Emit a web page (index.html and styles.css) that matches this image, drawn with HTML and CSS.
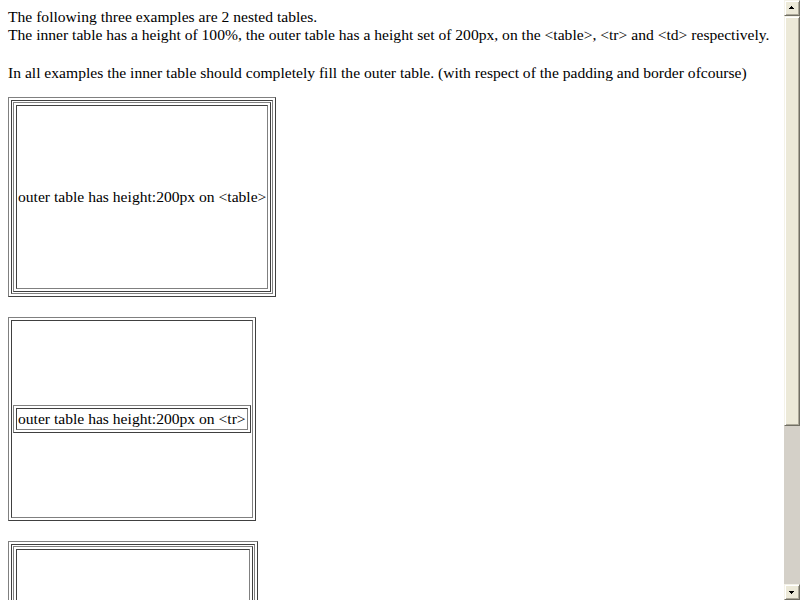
FILE: index.html
```html
<!DOCTYPE html>
<html>
<head>
<meta charset="utf-8">
<title>Nested tables</title>
<link rel="stylesheet" href="styles.css">
</head>
<body>
<div class="screen">
  <div class="page">
    <div class="intro">
      <div class="line">The following three examples are 2 nested tables.</div>
      <div class="line">The inner table has a height of 100%, the outer table has a height set of 200px, on the &lt;table&gt;, &lt;tr&gt; and &lt;td&gt; respectively.</div>
    </div>
    <p class="note">In all examples the inner table should completely fill the outer table. (with respect of the padding and border ofcourse)</p>

    <table class="ex ex-table">
      <tr><td>
        <table class="ex fill"><tr><td>outer table has height:200px on &lt;table&gt;</td></tr></table>
      </td></tr>
    </table>

    <table class="ex">
      <tr class="row-tall"><td>
        <table class="ex"><tr><td>outer table has height:200px on &lt;tr&gt;</td></tr></table>
      </td></tr>
    </table>

    <table class="ex ex-table">
      <tr><td>
        <table class="ex fill"><tr><td>outer table has height:200px on &lt;td&gt;</td></tr></table>
      </td></tr>
    </table>
  </div>
  <div class="scrollbar">
    <div class="sb-btn">
      <svg width="14" height="14" viewBox="0 0 14 14"><path d="M6 5h1v1h1v1h1v1H4V7h1V6h1z" fill="#000"/></svg>
    </div>
    <div class="sb-thumb"></div>
    <div class="sb-track"></div>
    <div class="sb-btn">
      <svg width="14" height="14" viewBox="0 0 14 14"><path d="M4 6h5v1H8v1H7v1H6V8H5V7H4z" fill="#000"/></svg>
    </div>
  </div>
</div>
</body>
</html>
```

FILE: styles.css
```css
html, body {
  margin: 0;
  padding: 0;
  overflow: hidden;
  background: #ffffff;
}

.screen {
  display: flex;
  width: 800px;
  height: 600px;
}

.page {
  flex: 1;
  min-width: 0;
  height: 600px;
  box-sizing: border-box;
  padding: 8px;
  overflow: hidden;
  font-family: "Liberation Serif", "Times New Roman", serif;
  font-size: 15.6px;
  line-height: 18px;
  color: #000;
}

.line {
  white-space: nowrap;
}

.note {
  margin: 20px 0 15px;
  white-space: nowrap;
}

.ex {
  border-collapse: separate;
  border-spacing: 2px;
  border: 1px solid;
  border-color: #808080 #404040 #404040 #808080;
  font-size: 15.6px;
  line-height: 18px;
  margin-bottom: 20px;
}

.ex td {
  padding: 1px;
  border: 1px solid;
  border-color: #404040 #808080 #808080 #404040;
  vertical-align: middle;
  white-space: nowrap;
}

.ex .ex {
  margin: 0;
}

.ex-table {
  height: 200px;
}

.fill {
  height: 190px;
}

.row-tall {
  height: 198px;
}

.scrollbar {
  width: 16px;
  height: 600px;
  display: flex;
  flex-direction: column;
  background: #d4d0c8;
}

.sb-btn {
  width: 16px;
  height: 16px;
  box-sizing: border-box;
  background: #ece9d8;
  border: 1px solid;
  border-color: #f4f2e8 #716f64 #716f64 #f4f2e8;
  box-shadow: inset 1px 1px #ffffff, inset -1px -1px #aca899;
  display: flex;
  align-items: center;
  justify-content: center;
}

.sb-btn svg {
  display: block;
}

.sb-thumb {
  height: 410px;
  box-sizing: border-box;
  background: #ece9d8;
  border: 1px solid;
  border-color: #f4f2e8 #716f64 #716f64 #f4f2e8;
  box-shadow: inset 1px 1px #ffffff, inset -1px -1px #aca899;
}

.sb-track {
  flex: 1;
  background: #d4d0c8;
}
```
